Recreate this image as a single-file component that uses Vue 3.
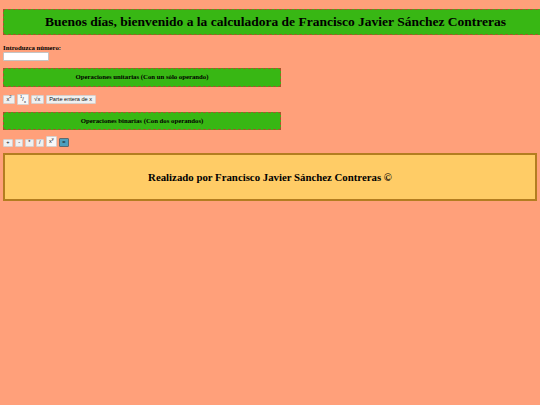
<template>
  <div class="page">
    <h1 class="banner title">Buenos días, bienvenido a la calculadora de Francisco Javier Sánchez Contreras</h1>

    <div class="entry">
      <label class="entry-label" for="numero">Introduzca número:</label>
      <input id="numero" class="entry-input" type="text" />
    </div>

    <h2 class="banner section">Operaciones unitarias (Con un sólo operando)</h2>
    <div class="buttons unary">
      <button class="btn wide"><span>x<sup>2</sup></span></button>
      <button class="btn wide tall"><span><sup>1</sup>/<sub>x</sub></span></button>
      <button class="btn wide root"><span>√x</span></button>
      <button class="btn long"><span>Parte entera de x</span></button>
    </div>

    <h2 class="banner section">Operaciones binarias (Con dos operandos)</h2>
    <div class="buttons binary">
      <button v-for="op in binaryOps" :key="op" class="btn op"><span>{{ op }}</span></button>
      <button class="btn power tall"><span>x<sup>y</sup></span></button>
      <button class="btn equals"><span>=</span></button>
    </div>

    <footer class="credits">Realizado por Francisco Javier Sánchez Contreras ©</footer>
  </div>
</template>

<script setup>
const binaryOps = ['+', '-', '*', '/']
</script>

<style>
html, body {
  margin: 0;
  background: #ffa07a;
}
</style>

<style scoped>
.page {
  height: 405px;
  overflow: hidden;
  box-sizing: border-box;
  padding: 9px 3px 0;
  background: #ffa07a;
  font-family: "Liberation Serif", serif;
  color: #000;
}

.banner {
  margin: 0;
  background: #38b714;
  border: 1px dashed #a5552c;
  text-align: center;
  font-weight: bold;
}

.title {
  width: 545px;
  box-sizing: border-box;
  height: 26px;
  line-height: 24px;
  font-size: 13.5px;
}

.section {
  width: 278px;
  box-sizing: border-box;
  height: 18.5px;
  line-height: 16.5px;
  font-size: 6.75px;
}

.entry {
  margin: 9px 0 7px;
  display: flex;
  flex-direction: column;
  align-items: flex-start;
}

.entry-label {
  font-size: 6.75px;
  font-weight: bold;
  line-height: 8px;
}

.entry-input {
  width: 44px;
  height: 7px;
  margin: 0;
  padding: 0;
  box-sizing: content-box;
  background: #fff;
  border: 1px solid #c4c4c4;
  border-radius: 1px;
}

.buttons {
  display: flex;
  align-items: center;
  gap: 2px;
  height: 11px;
  margin: 7px 0;
}

.binary {
  align-items: flex-end;
  height: 10px;
  margin: 6.7px 0 6.6px;
}

.btn {
  height: 7px;
  margin: 0;
  padding: 0;
  box-sizing: content-box;
  display: flex;
  align-items: center;
  justify-content: center;
  background: #f0f0f0;
  border: 1px solid #d8d0cc;
  border-radius: 1px;
  font-family: "Liberation Sans", sans-serif;
  font-size: 5.6px;
  line-height: 7px;
  color: #111;
  white-space: nowrap;
}

.btn.wide {
  width: 10px;
}

.btn.root {
  width: 10.6px;
}

.btn.long {
  width: 48px;
}

.btn.op {
  width: 6.3px;
  height: 6px;
}

.btn.op:first-child {
  width: 8px;
}

.btn.power {
  width: 9px;
}

.btn.tall {
  height: 9px;
  background: #f8f8f8;
}

.btn sup,
.btn sub {
  font-size: 4px;
  line-height: 0;
}

.btn.equals {
  width: 8px;
  background: #4d9fbc;
  border-color: #5a6a70;
}

.credits {
  width: 534px;
  box-sizing: border-box;
  height: 48px;
  line-height: 44px;
  background: #ffcc66;
  border: 2px solid #b47d20;
  text-align: center;
  font-size: 10.8px;
  font-weight: bold;
}
</style>
